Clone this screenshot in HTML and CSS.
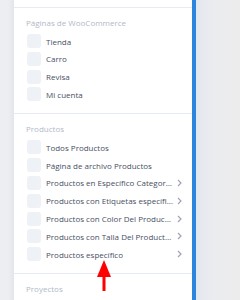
FILE: index.html
```html
<!DOCTYPE html>
<html lang="es">
<head>
    <meta charset="UTF-8">
    <meta name="viewport" content="width=device-width, initial-scale=1.0">
    <title>Condiciones de visualización</title>
    <link rel="stylesheet" href="styles.css">
</head>
<body>
    <div class="screen">
        <div class="gutter"></div>
        <div class="panel">
            <div class="panel-top"></div>

            <div class="group">
                <div class="group-title">Páginas de WooCommerce</div>
                <div class="opt"><span class="box"></span><span class="label">Tienda</span></div>
                <div class="opt"><span class="box"></span><span class="label">Carro</span></div>
                <div class="opt"><span class="box"></span><span class="label">Revisa</span></div>
                <div class="opt"><span class="box"></span><span class="label">Mi cuenta</span></div>
            </div>

            <div class="group">
                <div class="group-title">Productos</div>
                <div class="opt"><span class="box"></span><span class="label">Todos Productos</span></div>
                <div class="opt"><span class="box"></span><span class="label">Página de archivo Productos</span></div>
                <div class="opt"><span class="box"></span><span class="label">Productos en Específico Categorías</span>
                    <svg class="chev" width="5" height="8" viewBox="0 0 5 8"><path d="M1 1l3 3-3 3" fill="none" stroke="#9ca5b5" stroke-width="1.2"/></svg></div>
                <div class="opt"><span class="box"></span><span class="label">Productos con Etiquetas específicas</span>
                    <svg class="chev" width="5" height="8" viewBox="0 0 5 8"><path d="M1 1l3 3-3 3" fill="none" stroke="#9ca5b5" stroke-width="1.2"/></svg></div>
                <div class="opt"><span class="box"></span><span class="label">Productos con Color Del Producto específico</span>
                    <svg class="chev" width="5" height="8" viewBox="0 0 5 8"><path d="M1 1l3 3-3 3" fill="none" stroke="#9ca5b5" stroke-width="1.2"/></svg></div>
                <div class="opt"><span class="box"></span><span class="label">Productos con Talla Del Producto específico</span>
                    <svg class="chev" width="5" height="8" viewBox="0 0 5 8"><path d="M1 1l3 3-3 3" fill="none" stroke="#9ca5b5" stroke-width="1.2"/></svg></div>
                <div class="opt"><span class="box"></span><span class="label">Productos específico</span>
                    <svg class="chev" width="5" height="8" viewBox="0 0 5 8"><path d="M1 1l3 3-3 3" fill="none" stroke="#9ca5b5" stroke-width="1.2"/></svg></div>
            </div>

            <div class="group">
                <div class="group-title">Proyectos</div>
                <div class="opt"><span class="box"></span><span class="label">Todos Proyectos</span></div>
            </div>
        </div>
        <div class="side"></div>
    </div>

    <svg class="pointer" width="16" height="32" viewBox="0 0 16 32">
        <polygon points="8,0 15,17 1,17" fill="#ff0000"/>
        <rect x="6.5" y="16" width="3" height="15" fill="#ff0000"/>
    </svg>
</body>
</html>
```

FILE: styles.css
```css
html, body {
    height: 300px;
    overflow: hidden;
}
body {
    margin: 0;
    background: #eceef1;
    font-family: "Open Sans", "Liberation Sans", sans-serif;
}
.screen {
    display: flex;
    height: 300px;
    overflow: hidden;
    position: relative;
}
.gutter {
    width: 14px;
    flex: none;
    background: linear-gradient(90deg, #eceef1 0%, #eceef1 60%, #e2e5ea 100%);
}
.panel {
    width: 178px;
    flex: none;
    background: #fff;
    border-right: 4px solid #2b86de;
}
.panel-top {
    height: 7px;
    border-bottom: 1px solid #e6eaf1;
}
.side {
    flex: 1;
    background: linear-gradient(90deg, #e3e7ef 0%, #ebecef 40%, #ececec 100%);
}
.group {
    padding: 9px 0 12px 12px;
    border-bottom: 1px solid #e6eaf1;
}
.group-title {
    font-size: 8px;
    line-height: 12px;
    color: #b1b9c7;
    margin-bottom: 5px;
}
.opt {
    display: flex;
    align-items: center;
    height: 14px;
    margin-bottom: 3.8px;
}
.opt:last-child { margin-bottom: 0; }
.box {
    width: 14px;
    height: 14px;
    flex: none;
    margin-left: 1px;
    border-radius: 3px;
    background: #eef1f6;
}
.label {
    margin-left: 5px;
    width: 127px;
    font-size: 8px;
    color: #474f5f;
    white-space: nowrap;
    overflow: hidden;
    text-overflow: ellipsis;
}
.chev {
    flex: none;
    margin-left: 4px;
}
.pointer {
    position: absolute;
    left: 96px;
    top: 260px;
}
```
